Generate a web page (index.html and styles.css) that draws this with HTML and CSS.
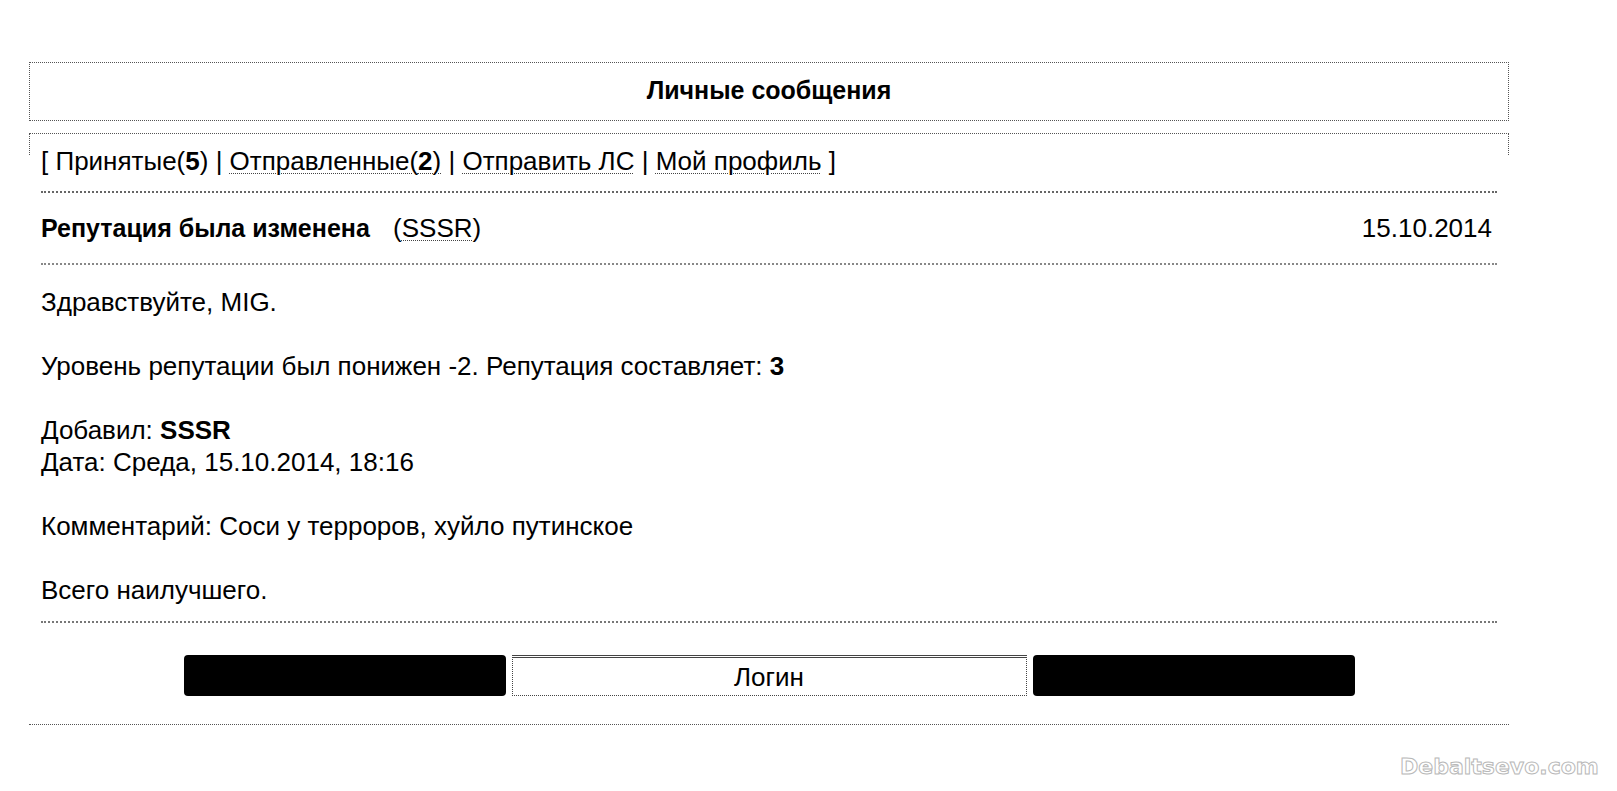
FILE: index.html
```
<!DOCTYPE html>
<html>
<head>
    <title>Личные сообщения</title>
    <link rel="stylesheet" href="styles.css">
</head>
<body>
    <div class="page">
        <div class="head-box">Личные сообщения</div>

        <div class="nav-box">
            <div class="nav">
                [ Принятые(<b>5</b>) |
                <a href="#">Отправленные(<b>2</b>)</a> |
                <a href="#">Отправить ЛС</a> |
                <a href="#">Мой профиль</a> ]
            </div>
        </div>

        <div class="msg">
            <div class="msg-head">
                <div class="msg-title">
                    <b>Репутация была изменена</b>
                    <span class="msg-from">(<a href="#">SSSR</a>)</span>
                </div>
                <div class="msg-date">15.10.2014</div>
            </div>

            <div class="msg-body">
                Здравствуйте, MIG.<br><br>
                Уровень репутации был понижен -2. Репутация составляет: <b>3</b><br><br>
                Добавил: <b>SSSR</b><br>
                Дата: Среда, 15.10.2014, 18:16<br><br>
                Комментарий: Соси у терроров, хуйло путинское<br><br>
                Всего наилучшего.
            </div>
        </div>

        <div class="buttons">
            <div class="btn btn-dark"></div>
            <div class="btn btn-login">Логин</div>
            <div class="btn btn-dark"></div>
        </div>
    </div>

    <div class="watermark">Debaltsevo.com</div>
</body>
</html>
```

FILE: styles.css
```
body {
    margin: 0;
    background: #fff;
    color: #000;
    font-family: "Liberation Sans", Arial, sans-serif;
    font-size: 26px;
}

a {
    color: #000;
    text-decoration: underline dotted #444;
    text-decoration-thickness: 1px;
    text-underline-offset: 3px;
}

.page {
    width: 1480px;
    margin: 62px 0 0 29px;
    border-bottom: 1px dotted #555;
    padding-bottom: 28px;
}

.head-box {
    height: 57px;
    line-height: 55px;
    border: 1px dotted #555;
    text-align: center;
    font-weight: bold;
    font-size: 25px;
}

.nav-box {
    position: relative;
    margin-top: 12px;
    padding: 12px 12px 0 12px;
}

.nav-box::before {
    content: "";
    position: absolute;
    left: 0;
    right: 0;
    top: 0;
    height: 21px;
    border: 1px dotted #555;
    border-bottom: none;
}

.nav {
    line-height: 32px;
    padding-bottom: 14px;
    border-bottom: 2px dotted #666;
}

.msg {
    padding: 0 12px;
}

.msg-head {
    display: flex;
    justify-content: space-between;
    align-items: center;
    padding: 19px 5px 19px 0;
    line-height: 32px;
    border-bottom: 2px dotted #888;
}

.msg-title b {
    font-size: 25px;
}

.msg-from {
    margin-left: 16px;
}

.msg-body {
    line-height: 32px;
    padding: 21px 0 15px 0;
    border-bottom: 2px dotted #777;
}

.buttons {
    display: flex;
    justify-content: center;
    gap: 6px;
    margin-top: 32px;
}

.btn {
    height: 41px;
    box-sizing: border-box;
}

.btn-dark {
    width: 322px;
    background: #000;
    border-radius: 4px;
}

.btn-login {
    width: 515px;
    border: 1px dotted #444;
    border-top: 3px double #444;
    text-align: center;
    line-height: 38px;
}

.watermark {
    position: absolute;
    left: 1400px;
    top: 754px;
    font-family: "DejaVu Sans", sans-serif;
    font-weight: bold;
    font-size: 22px;
    color: #fff;
    -webkit-text-stroke: 1px #b8b8b8;
}
```
